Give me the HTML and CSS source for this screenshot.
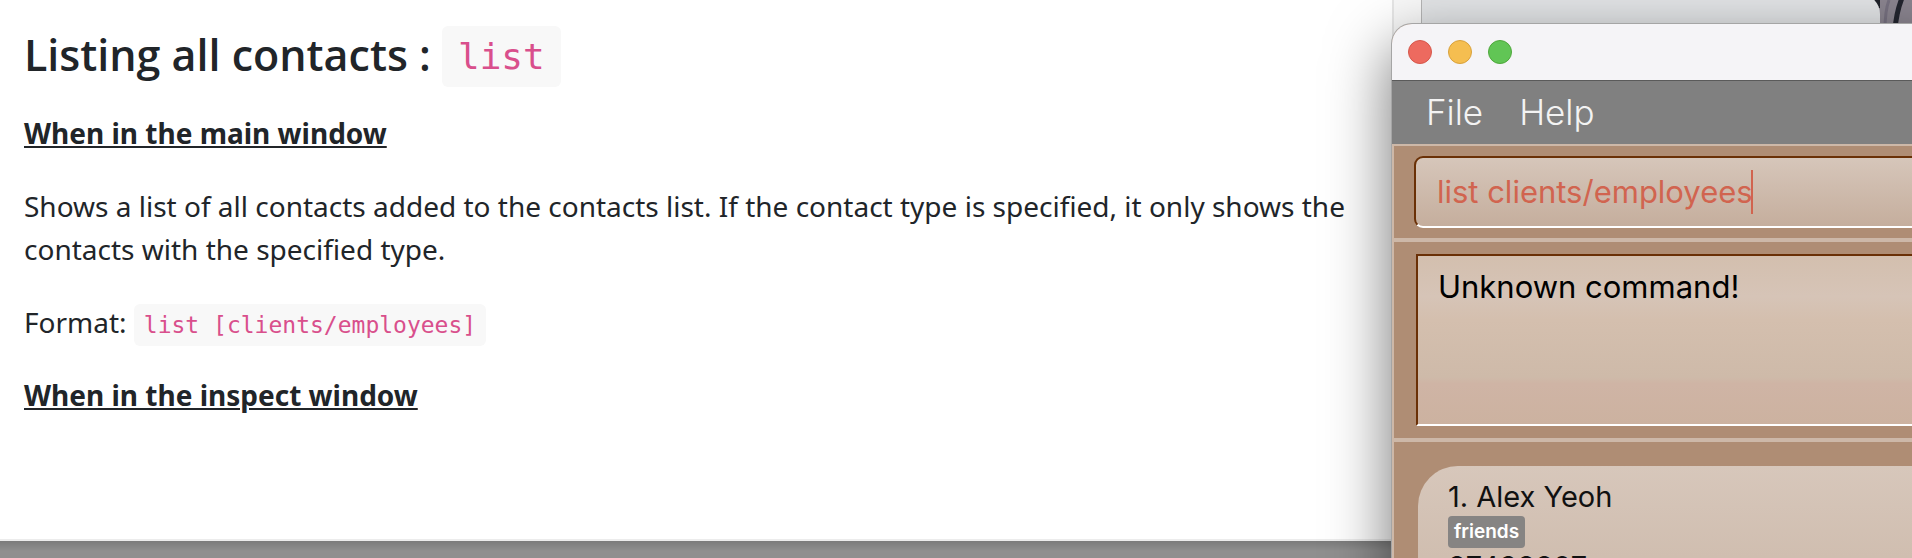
FILE: index.html
```html
<!DOCTYPE html>
<html lang="en">
<head>
<meta charset="utf-8">
<title>Listing all contacts</title>
<link rel="stylesheet" href="styles.css">
</head>
<body>
<div class="desktop">
  <svg class="wallpaper" viewBox="0 0 60 30" preserveAspectRatio="none" aria-hidden="true">
    <rect width="60" height="30" fill="#8b8590"/>
    <path d="M0 0H28V8H0Z" fill="#20222a"/>
    <path d="M50 -2C46 8 44 16 43 30" fill="none" stroke="#23252f" stroke-width="5"/>
    <path d="M37 0C34 8 33 16 33 30" fill="none" stroke="#777180" stroke-width="3"/>
  </svg>
  <div class="back-window"></div>
  <main class="doc">
    <article class="doc-body">
      <h2 class="title">Listing all contacts : <code>list</code></h2>
      <p class="section">When in the main window</p>
      <p>Shows a list of all contacts added to the contacts list. If the contact type is specified, it only shows the contacts with the specified type.</p>
      <p>Format: <code>list [clients/employees]</code></p>
      <p class="section">When in the inspect window</p>
    </article>
    <div class="scroll-track"></div>
  </main>
  <section class="app" aria-label="Contacts">
    <header class="titlebar">
      <button class="light close" aria-label="Close"></button>
      <button class="light minimise" aria-label="Minimise"></button>
      <button class="light zoom" aria-label="Zoom"></button>
    </header>
    <nav class="menu">
      <button>File</button>
      <button>Help</button>
    </nav>
    <div class="content">
      <div class="pane command">
        <input class="field" type="text" aria-label="Command" value="list clients/employees">
        <span class="caret"></span>
      </div>
      <div class="pane result">
        <textarea class="output" aria-label="Result" readonly>Unknown command!</textarea>
      </div>
      <div class="pane list">
        <div class="card">
          <div class="name">1. Alex Yeoh</div>
          <span class="tag">friends</span>
          <div class="phone">87438807</div>
        </div>
      </div>
    </div>
  </section>
</div>
</body>
</html>
```

FILE: styles.css
```css
* { box-sizing: border-box; }

body {
  margin: 0;
  color: #212529;
  font-family: "Noto Sans", "Open Sans", sans-serif;
}

.desktop {
  position: relative;
  height: 100vh;
  overflow: hidden;
  background: linear-gradient(#7b7b7b, #8f8f8f 10px) 0 100% / 100% 17px no-repeat #8f8f8f;
}

.wallpaper {
  position: absolute;
  top: 0;
  right: 0;
  width: 60px;
  height: 30px;
}

.back-window {
  position: absolute;
  top: -6px;
  left: 0;
  right: 32px;
  height: 80px;
  border-radius: 20px;
  background: #e2e4e6;
}

/* Documentation page */
.doc {
  position: absolute;
  inset: 0 auto 17px 0;
  width: calc(72.8% + 30px);
  display: flex;
  background: #fff;
  border-bottom: 2px solid #ececec;
}

.doc-body {
  flex: 1;
  padding: 22px 36px 0 24px;
  font-size: 28px;
  line-height: 43px;
}

.doc-body p { margin: 0 0 30px; }

.doc-body .title {
  margin: 0 0 24px;
  font-family: "Open Sans", "Noto Sans", sans-serif;
  font-size: 43px;
  font-weight: 600;
  line-height: 66px;
}

.section {
  font-weight: 700;
  text-decoration: underline;
}

code {
  padding: 8px 10px;
  border-radius: 6px;
  background: #f8f8f8;
  color: #d94f8c;
  font-family: "DejaVu Sans Mono", monospace;
  font-size: 23px;
  line-height: 1;
}

.title code {
  padding: 10px 16px;
  font-size: 36px;
  font-weight: 400;
  vertical-align: 2px;
}

.scroll-track {
  width: 30px;
  border-left: 2px solid #e6e6e6;
  border-right: 1px solid #b5b5b5;
  background: #f8f8f8;
}

/* Contacts application window */
.app {
  position: absolute;
  top: 24px;
  left: 72.8%;
  right: -40px;
  bottom: -60px;
  display: flex;
  flex-direction: column;
  overflow: hidden;
  border-radius: 20px 0 0 0;
  background: #af8d74;
  box-shadow: 0 0 0 1px #a5a5a5, 0 24px 60px 4px rgba(0, 0, 0, 0.5);
}

.app, .app button, .field, .output { font-family: Inter, sans-serif; }

.titlebar {
  flex: none;
  display: flex;
  gap: 16px;
  padding: 16px;
  height: 56px;
  background: #f5f4f7;
}

.light {
  width: 24px;
  height: 24px;
  padding: 0;
  border: 1px solid;
  border-radius: 50%;
}

.close { background: #ed6a5f; border-color: #d5574b; }
.minimise { background: #f5be50; border-color: #d8a13c; }
.zoom { background: #61c555; border-color: #4fa73c; }

.menu {
  flex: none;
  display: flex;
  gap: 36px;
  padding: 0 34px 2px;
  height: 64px;
  border-top: 1px solid #5a5a5a;
  background: #808080;
}

.menu button {
  padding: 0;
  border: 0;
  background: none;
  color: #f3f3f3;
  font-size: 35px;
  font-weight: 300;
}

.content {
  flex: 1;
  border-top: 2px solid #cdb8a8;
  border-left: 2px solid #cdb8a8;
}

.pane { padding: 10px 20px; border-bottom: 4px solid #cdb8a8; }

.command { position: relative; }

.field {
  display: block;
  width: 100%;
  height: 72px;
  padding: 0 21px 2px;
  border: 2px solid #6a3006;
  border-bottom-color: #fff;
  border-radius: 9px;
  background: linear-gradient(#d6c6ba, #c5ae9d);
  color: #d1644f;
  font-size: 31px;
  outline: 0;
}

.caret {
  position: absolute;
  top: 24px;
  left: 357px;
  width: 2px;
  height: 44px;
  background: #d1644f;
}

.result { padding: 12px 22px; }

.output {
  display: block;
  width: 100%;
  height: 172px;
  padding: 9px 20px;
  border: 2px solid #6a3006;
  border-bottom-color: #fff;
  background: linear-gradient(#d3bfae, #d6c4b7 24%, #d4bfae 38%, #cebaa9 72%, #cfb4a5 76%, #ccb2a0);
  color: #000;
  font-size: 31px;
  line-height: 44px;
  resize: none;
  outline: 0;
}

.list { padding: 24px; }

.card {
  padding: 12px 30px;
  border-radius: 40px 0 0 40px;
  background: linear-gradient(#d7c7bb, #c6b1a0 220px);
  color: #111;
  font-size: 29px;
  line-height: 38px;
}

.tag {
  display: block;
  width: max-content;
  padding: 0 6px;
  border-radius: 4px;
  background: #868483;
  color: #fff;
  font-size: 19px;
  font-weight: 600;
  line-height: 32px;
}
```
